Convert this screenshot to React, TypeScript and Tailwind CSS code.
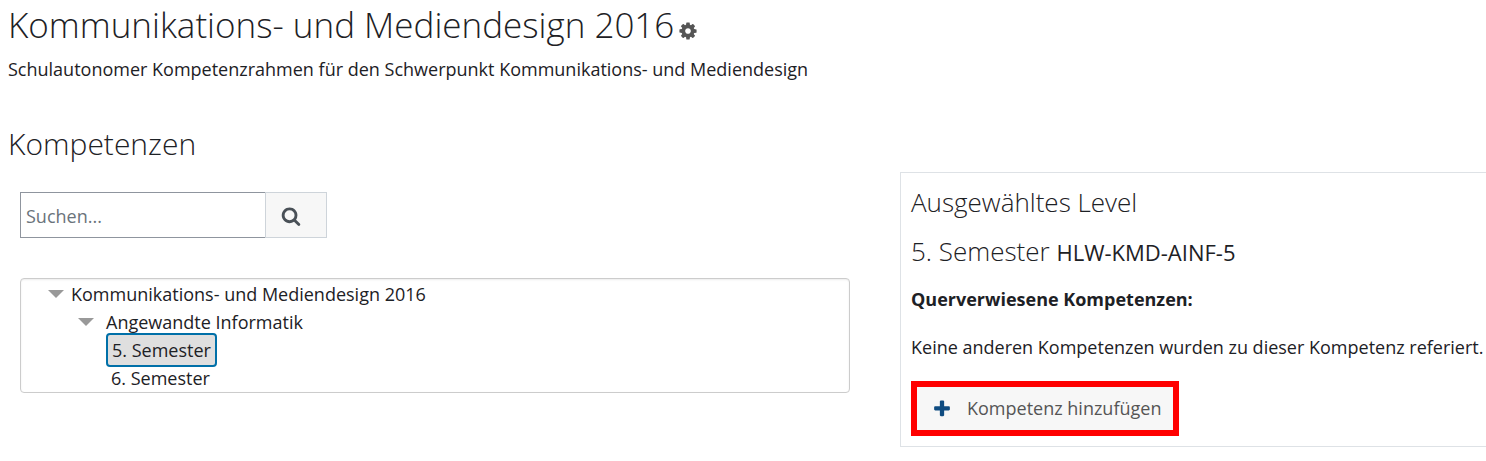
import React from "react";

interface IconProps {
  path: string;
  className?: string;
}

const COG =
  "M1152 896q0-106-75-181t-181-75-181 75-75 181 75 181 181 75 181-75 75-181zm512-109v222q0 12-8 23t-20 13l-185 28q-19 54-39 91 35 50 107 138 10 12 10 25t-9 23q-27 37-99 108t-94 71q-12 0-26-9l-138-108q-44 23-91 38-16 136-29 186-7 28-36 28h-222q-14 0-24.500-8.500t-11.500-21.500l-28-184q-49-16-90-37l-141 107q-10 9-25 9-14 0-25-11-126-114-165-168-7-10-7-23 0-12 8-23 15-21 51-66.500t54-70.500q-27-50-41-99l-183-27q-13-2-21-12.500t-8-23.500v-222q0-12 8-23t19-13l186-28q14-46 39-92-40-57-107-138-10-12-10-24 0-10 9-23 26-36 98.500-107.500t94.500-71.500q13 0 26 10l138 107q44-23 91-38 16-136 29-186 7-28 36-28h222q14 0 24.500 8.500t11.500 21.500l28 184q49 16 90 37l142-107q9-9 24-9 13 0 25 10 129 119 165 170 7 8 7 22 0 12-8 23-15 21-51 66.500t-54 70.500q26 50 41 98l183 28q13 2 21 12.500t8 23.500z";
const SEARCH =
  "M1216 832q0-185-131.500-316.500t-316.500-131.500-316.500 131.500-131.500 316.500 131.500 316.500 316.500 131.500 316.500-131.500 131.500-316.500zm512 832q0 52-38 90t-90 38q-54 0-90-38l-343-342q-179 124-399 124-143 0-273.500-55.500t-225-150-150-225-55.500-273.500 55.500-273.500 150-225 225-150 273.500-55.500 273.500 55.500 225 150 150 225 55.500 273.500q0 220-124 399l343 343q37 37 37 90z";
const PLUS =
  "M1600 736v192q0 40-28 68t-68 28h-416v416q0 40-28 68t-68 28h-192q-40 0-68-28t-28-68v-416h-416q-40 0-68-28t-28-68v-192q0-40 28-68t68-28h416v-416q0-40 28-68t68-28h192q40 0 68 28t28 68v416h416q40 0 68 28t28 68z";

const Icon: React.FC<IconProps> = ({ path, className }) => (
  <svg viewBox="0 0 1792 1792" fill="currentColor" aria-hidden="true" className={className}>
    <path d={path} />
  </svg>
);

const Caret: React.FC = () => (
  <svg viewBox="0 0 16 8" className="w-4 h-2 shrink-0 text-[#999999]" fill="currentColor" aria-hidden="true">
    <path d="M0 0h16L8 8z" />
  </svg>
);

const SearchForm: React.FC = () => (
  <form className="flex h-[46px] w-[307px]" onSubmit={(e) => e.preventDefault()}>
    <input
      type="text"
      aria-label="Suchen"
      placeholder="Suchen..."
      className="min-w-0 flex-1 border border-r-0 border-[#8f959e] px-[5px] pt-0.5 placeholder:text-[#6a737b]"
    />
    <button
      type="submit"
      aria-label="Suchen"
      className="flex w-[62px] items-center border border-[#ced4da] bg-[#f7f7f7] pl-[15px] pt-0.5 text-[#495057]"
    >
      <Icon path={SEARCH} className="size-5" />
    </button>
  </form>
);

const CompetencyTree: React.FC = () => (
  <ul className="rounded border border-[#cccccc] pt-px leading-7 shadow-[inset_0_1px_2px_rgba(0,0,0,0.08)]">
    <li>
      <div className="flex items-center gap-[7px] pl-[27px]">
        <Caret />
        <span>Kommunikations- und Mediendesign 2016</span>
      </div>
      <ul>
        <li>
          <div className="flex items-center gap-3 pl-[57px]">
            <Caret />
            <span>Angewandte Informatik</span>
          </div>
          <ul className="pl-[85px]">
            <li className="flex h-7 items-center">
              <span className="rounded border-2 border-[#0070a8] bg-[#dfdfdf] px-1 py-px">5. Semester</span>
            </li>
            <li className="pl-[5px]">6. Semester</li>
          </ul>
        </li>
      </ul>
    </li>
  </ul>
);

const SelectedLevel: React.FC = () => (
  <section className="border border-r-0 border-[#dee2e6] pt-[9px] pb-2.5 pl-2.5">
    <h3 className="text-[26px] leading-10 font-light">Ausgewähltes Level</h3>
    <h4 className="mt-[9px] text-[26px] leading-10 font-light">
      5. Semester <span className="text-[22px] font-normal">HLW-KMD-AINF-5</span>
    </h4>
    <p className="mt-[13px] leading-7 font-bold">Querverwiesene Kompetenzen:</p>
    <p className="mt-5 leading-7">Keine anderen Kompetenzen wurden zu dieser Kompetenz referiert.</p>
    <button
      type="button"
      className="mt-5 flex h-[55px] items-center gap-[15px] border-6 border-[#ff0000] bg-[#f7f7f7] pr-3 pl-[15px] text-[#555555]"
    >
      <Icon path={PLUS} className="size-5 text-[#0f4c81]" />
      Kompetenz hinzufügen
    </button>
  </section>
);

export default function App() {
  return (
    <main className="bg-white pl-2 font-['Open_Sans',sans-serif] text-[18px] text-[#1d2125]">
      <h1 className="flex items-center gap-1 text-[35px] leading-[50px] font-light">
        Kommunikations- und Mediendesign 2016
        <button type="button" aria-label="Einstellungen" className="pt-3 text-[#555555]">
          <Icon path={COG} className="size-5" />
        </button>
      </h1>
      <p className="mt-[5px] leading-7">
        Schulautonomer Kompetenzrahmen für den Schwerpunkt Kommunikations- und Mediendesign
      </p>
      <h2 className="mt-[37px] text-[30px] leading-[48px] font-light">Kompetenzen</h2>
      <div className="mt-1 grid grid-cols-[830fr_586fr] items-start gap-[50px] pl-3">
        <div className="flex flex-col gap-10 pt-5">
          <SearchForm />
          <CompetencyTree />
        </div>
        <SelectedLevel />
      </div>
    </main>
  );
}
